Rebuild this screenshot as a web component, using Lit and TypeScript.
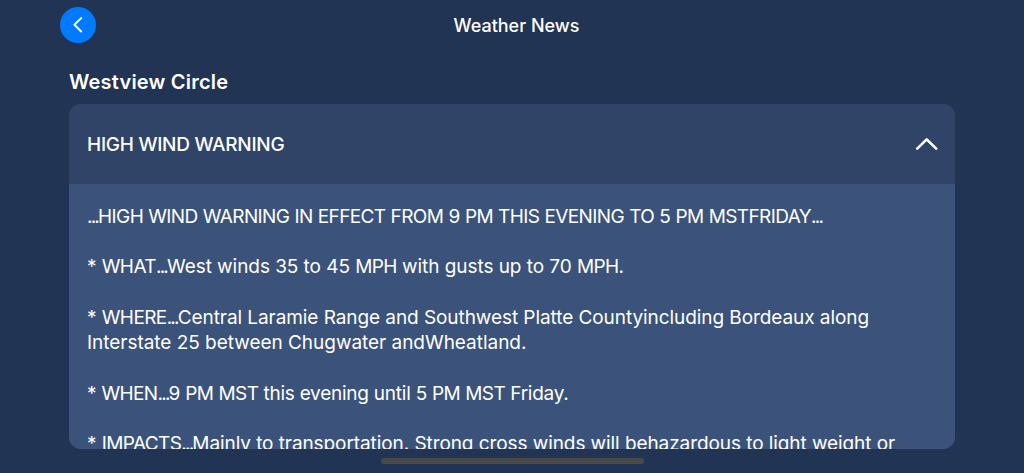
import { LitElement, html, css } from 'lit';
import { customElement, property } from 'lit/decorators.js';

interface Line {
  text: string;
  spacing: number;
}

const LINES: Line[] = [
  { text: '...HIGH WIND WARNING IN EFFECT FROM 9 PM THIS EVENING TO 5 PM MSTFRIDAY...', spacing: -0.3 },
  { text: '', spacing: 0 },
  { text: '* WHAT...West winds 35 to 45 MPH with gusts up to 70 MPH.', spacing: -0.06 },
  { text: '', spacing: 0 },
  { text: '* WHERE...Central Laramie Range and Southwest Platte Countyincluding Bordeaux along', spacing: -0.07 },
  { text: 'Interstate 25 between Chugwater andWheatland.', spacing: -0.03 },
  { text: '', spacing: 0 },
  { text: '* WHEN...9 PM MST this evening until 5 PM MST Friday.', spacing: -0.24 },
  { text: '', spacing: 0 },
  { text: '* IMPACTS...Mainly to transportation. Strong cross winds will behazardous to light weight or', spacing: -0.08 },
];

@customElement('nav-header')
export class NavHeader extends LitElement {
  @property() heading = '';

  static styles = css`
    :host {
      display: grid;
      grid-template-columns: 36px 1fr 36px;
      align-items: center;
      height: 50px;
      padding: 0 60px;
      margin-right: -9px;
      box-sizing: border-box;
    }

    .back {
      width: 36px;
      height: 36px;
      padding: 0;
      border: 0;
      border-radius: 50%;
      background: #007aff;
    }

    svg {
      display: block;
    }

    .title {
      text-align: center;
      font-size: 18px;
      font-weight: 500;
    }
  `;

  render() {
    return html`
      <button class="back" aria-label="Back">
        <svg width="36" height="36" viewBox="0 0 36 36" fill="none">
          <path
            d="M21.2 11.1 14.4 17.8 21.2 24.5"
            stroke="#fff"
            stroke-width="2"
            stroke-linecap="round"
            stroke-linejoin="round"
          />
        </svg>
      </button>
      <div class="title">${this.heading}</div>
    `;
  }
}

@customElement('alert-card')
export class AlertCard extends LitElement {
  @property() heading = '';
  @property({ attribute: false }) lines: Line[] = [];

  static styles = css`
    :host {
      display: block;
      height: 344.5px;
      border-radius: 12px;
      overflow: hidden;
      background: #3b537b;
    }

    .header {
      display: flex;
      align-items: center;
      justify-content: space-between;
      height: 80px;
      padding: 0 17px 0 18px;
      box-sizing: border-box;
      background: #304468;
    }

    .name {
      font-size: 19px;
      font-weight: 500;
      letter-spacing: -0.27px;
    }

    .body {
      padding: 19.5px 18px 0;
      font-size: 19px;
      line-height: 25.3px;
      white-space: nowrap;
    }

    .line {
      height: 25.3px;
    }

    .dots {
      letter-spacing: -1.8px;
    }

    .caps {
      letter-spacing: -0.6px;
    }
  `;

  // Ellipses and all-caps words are set tighter than the rest of the line
  renderText(text: string) {
    return text.split(/(\.{3}|[A-Z]{2,}(?![a-z]))/).map((part) => {
      if (part === '...') return html`<span class="dots">${part}</span>`;
      if (/^[A-Z]{2,}$/.test(part)) return html`<span class="caps">${part}</span>`;
      return part;
    });
  }

  render() {
    return html`
      <div class="header">
        <span class="name">${this.heading}</span>
        <svg width="23" height="16" viewBox="0 0 23 16" fill="none">
          <path
            d="M2.2 12.6 11.7 3.4 21.2 12.6"
            stroke="#fff"
            stroke-width="2.6"
            stroke-linecap="round"
            stroke-linejoin="round"
          />
        </svg>
      </div>
      <div class="body">
        ${this.lines.map(
          (line) => html`<div class="line"><span style="letter-spacing: ${line.spacing}px">${this.renderText(line.text)}</span></div>`
        )}
      </div>
    `;
  }
}

@customElement('app-root')
export class AppRoot extends LitElement {
  static styles = css`
    :host {
      display: flex;
      flex-direction: column;
      height: 473px;
      overflow: hidden;
      background: #213453;
      color: #fff;
      font-family: Inter, 'Liberation Sans', sans-serif;
    }

    .content {
      padding: 20px 69px 0;
    }

    .location {
      height: 34px;
      margin: 0;
      font-size: 20px;
      font-weight: 600;
      line-height: 24px;
      letter-spacing: 0.2px;
    }

    .home-indicator {
      width: 263px;
      height: 6px;
      margin: 9px auto 0;
      border-radius: 3px;
      background: #4a4a4a;
    }
  `;

  render() {
    return html`
      <nav-header heading="Weather News"></nav-header>
      <div class="content">
        <h1 class="location">Westview Circle</h1>
        <alert-card heading="HIGH WIND WARNING" .lines=${LINES}></alert-card>
      </div>
      <div class="home-indicator"></div>
    `;
  }
}
